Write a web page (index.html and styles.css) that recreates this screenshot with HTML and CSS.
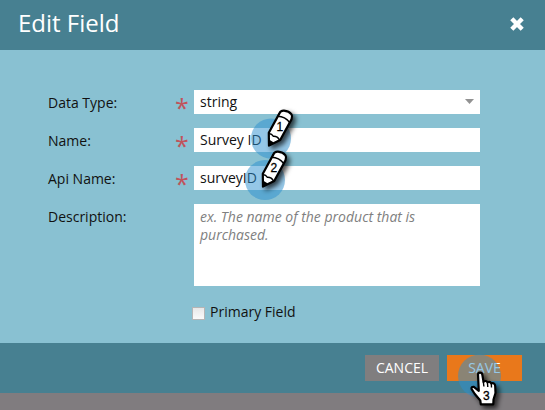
FILE: index.html
```html
<!DOCTYPE html>
<html lang="en">
<head>
<meta charset="utf-8">
<title>Edit Field</title>
<link rel="stylesheet" href="styles.css">
</head>
<body>
<main class="dialog">
  <header class="header">
    <h1 class="title">Edit Field</h1>
    <svg class="close" width="14" height="14" viewBox="0 0 14 14"><path d="M1.8 1.8 12.2 12.2M12.2 1.8 1.8 12.2" stroke="#fff" stroke-width="4.4"/></svg>
  </header>
  <form class="form">
    <div class="row">
      <span class="label">Data Type:</span><span class="required">*</span>
      <div class="input select">string<svg width="9" height="5" viewBox="0 0 9 5"><path d="M0 0h9L4.5 5z" fill="#929292"/></svg></div>
    </div>
    <div class="row">
      <span class="label">Name:</span><span class="required">*</span>
      <div class="input">Survey ID</div>
    </div>
    <div class="row">
      <span class="label">Api Name:</span><span class="required">*</span>
      <div class="input">surveyID</div>
    </div>
    <div class="row tall">
      <span class="label">Description:</span><span class="required"></span>
      <div class="input area">ex. The name of the product that is purchased.</div>
    </div>
    <div class="check"><span class="box"></span>Primary Field</div>
  </form>
  <footer class="footer">
    <span class="button cancel">CANCEL</span>
    <span class="button save">SAVE</span>
  </footer>
</main>
<svg class="markers" width="545" height="410" viewBox="0 0 545 410">
  <defs>
    <filter id="shadow" x="-50%" y="-50%" width="220%" height="220%"><feDropShadow dx="3" dy="3" stdDeviation="2.5" flood-color="#000" flood-opacity=".7"/></filter>
    <g id="pencil">
      <path d="M268.8 132.7 279.3 113.6Q280.5 110.5 284 110.7 289 111.2 291.5 114.4 292.6 116 291.5 119.4L280.2 140 269 145.5Z" fill="#fff" stroke="#000" stroke-width="2.2" stroke-linejoin="round"/>
      <path d="M277.8 116.2Q285 116.2 289.8 122.5" fill="none" stroke="#000" stroke-width="1.5"/>
      <path d="M269 133.5Q272 133.7 273.3 136.2 277.5 135.9 279.5 140" fill="none" stroke="#000" stroke-width="1.4"/>
      <path d="M268.6 139.2 274.2 142.8 268.4 146.4Z"/>
    </g>
  </defs>
  <circle class="halo" cx="271" cy="138.5" r="20"/>
  <circle class="halo" cx="265" cy="180" r="20"/>
  <circle class="halo" cx="479.5" cy="376" r="21.5"/>
  <use href="#pencil" filter="url(#shadow)"/>
  <text x="279.8" y="131.2">1</text>
  <g transform="translate(-6 41)"><use href="#pencil" filter="url(#shadow)"/></g>
  <text x="273.8" y="172.2">2</text>
  <path filter="url(#shadow)" d="M478 374.5Q478 372.6 480 372.6 482 372.6 482.3 374.5L483.5 381.8Q486 380 487.5 382.3 490 381 491.3 383.4 494.8 382.4 495.2 386L495.5 393 493.5 399.5 493.3 404.3H480.8L480.3 400.5 474.8 394 471.5 388.8Q471.4 386.4 473.8 386.8L478.8 390.8Z" fill="#fff" stroke="#000" stroke-width="2.2" stroke-linejoin="round"/>
  <path d="M483.3 381.5 483.9 386.5M487.4 382.3 487.8 387M491.3 383.5 491.5 387.5" fill="none" stroke="#000" stroke-width="1.4"/>
  <text x="486.3" y="400">3</text>
</svg>
</body>
</html>
```

FILE: styles.css
```css
* { box-sizing: border-box; }
body {
  margin: 0;
  position: relative;
  width: 545px;
  height: 410px;
  overflow: hidden;
  background: #807c7f;
  color: #111;
  font: 14px/20px "Open Sans", "Noto Sans", sans-serif;
}
.header {
  display: flex;
  align-items: center;
  justify-content: space-between;
  height: 50px;
  padding: 0 21px 3px 18px;
  background: #478091;
}
.title { margin: -2px 0 0; color: #fff; font-size: 24px; font-weight: 400; line-height: 32px; }
.close { display: block; }
.form {
  height: 293px;
  padding: 40px 65px 0 48px;
  background: #89c1d2;
}
.row { display: flex; height: 24px; margin-bottom: 14px; }
.tall { height: 82px; }
.label { width: 127px; padding-top: 3px; }
.required { width: 19px; color: #c0535b; font-size: 25px; line-height: 34px; }
.input {
  width: 286px;
  padding: 2px 6px;
  background: #fff;
}
.select { display: flex; justify-content: space-between; }
.select svg { margin-top: 7px; }
.area { color: #808080; font-style: italic; line-height: 18px; padding: 4px 50px 0 6px; }
.check { display: flex; align-items: center; gap: 5px; margin: 16px 0 0 144px; }
.box {
  width: 13px;
  height: 13px;
  margin-top: 3px;
  border: 1px solid #b5b5b5;
  background: linear-gradient(#e8e8e8, #fafafa);
}
.footer {
  display: flex;
  justify-content: flex-end;
  gap: 8px;
  height: 50px;
  padding: 12px 23px;
  background: #478091;
}
.button {
  height: 26px;
  color: #fff;
  line-height: 26px;
  text-align: center;
}
.cancel { width: 74px; background: #807e7f; }
.save { width: 75px; background: #e9781b; }
.markers { position: absolute; left: 0; top: 0; }
.markers text { font: 12px "Liberation Sans", sans-serif; text-anchor: middle; stroke: #000; stroke-width: .3px; }
.halo { fill: #2b8fcf; fill-opacity: .5; }
```
